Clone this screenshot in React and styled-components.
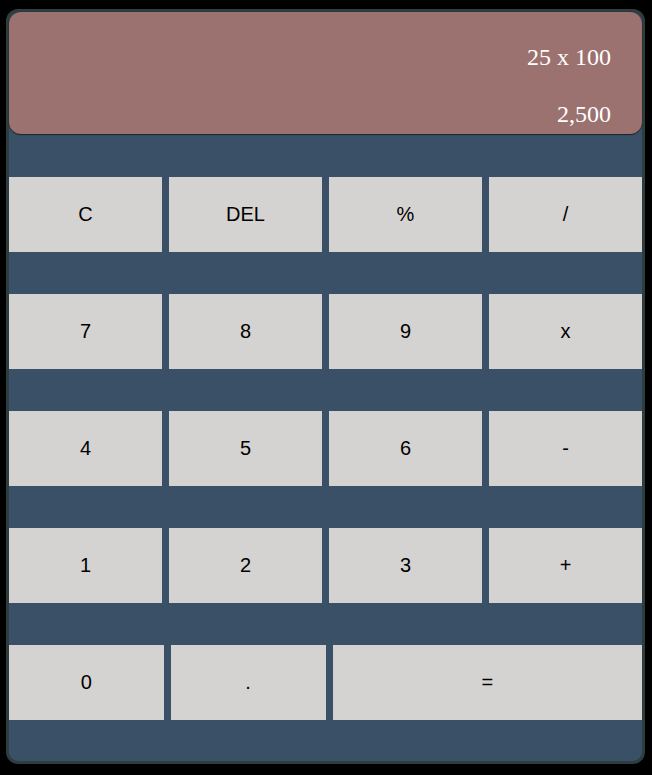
import React from 'react';
import styled, { createGlobalStyle } from 'styled-components';

const GlobalStyle = createGlobalStyle`
    html, body {
        margin: 0;
        padding: 0;
        background: #000;
    }
    body {
        padding: 9px 7px 0 6px;
    }
`;

const Calculator = styled.div`
    width: 639px;
    height: 755px;
    box-sizing: border-box;
    border: 3px solid #2e3d3e;
    border-radius: 12px;
    background-color: #3a5066;
    display: flex;
    flex-direction: column;
`;

const Display = styled.div`
    height: 122px;
    box-sizing: border-box;
    background-color: #9b7270;
    border-radius: 12px;
    box-shadow: 0 1px 1px rgba(0, 0, 0, 0.55), 0 0 1px rgba(0, 0, 0, 0.5);
    padding: 31px 31px 0;
    display: flex;
    flex-direction: column;
    align-items: flex-end;
    gap: 29px;
    color: #fff;
    font-family: "Liberation Serif", "Times New Roman", serif;
    font-size: 24px;
    line-height: 28px;
`;

const Keypad = styled.div`
    display: flex;
    flex-direction: column;
    gap: 42px;
    padding-top: 43px;
`;

const Row = styled.div`
    display: flex;
    gap: 7px;
    height: 75px;
`;

const Key = styled.button`
    flex: ${(p) => p.$span || 1};
    min-width: 0;
    border: none;
    padding: 0;
    margin: 0;
    background-color: #d4d3d2;
    color: #000;
    font-family: "Liberation Sans", Arial, sans-serif;
    font-size: 20px;
    cursor: pointer;
`;

const rows = [
    [['C'], ['DEL'], ['%'], ['/']],
    [['7'], ['8'], ['9'], ['x']],
    [['4'], ['5'], ['6'], ['-']],
    [['1'], ['2'], ['3'], ['+']],
    [['0'], ['.'], ['=', 2]],
];

const App = () => {
    return (
        <>
            <GlobalStyle />
            <Calculator>
                <Display>
                    <div>25 x 100</div>
                    <div>2,500</div>
                </Display>
                <Keypad>
                    {rows.map((row, i) => (
                        <Row key={i}>
                            {row.map(([label, span]) => (
                                <Key key={label} $span={span}>{label}</Key>
                            ))}
                        </Row>
                    ))}
                </Keypad>
            </Calculator>
        </>
    );
};

export default App;
